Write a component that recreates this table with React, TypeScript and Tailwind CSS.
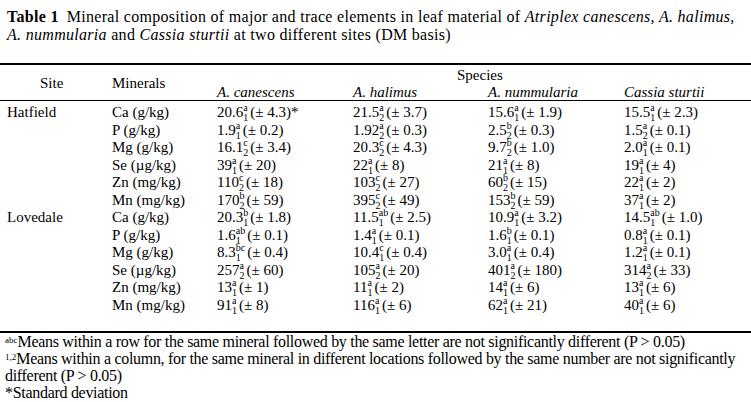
const species = ['A. canescens', 'A. halimus', 'A. nummularia', 'Cassia sturtii'];

type Cell = [string, string, string, string];

const sites: { name: string; rows: { mineral: string; cells: Cell[] }[] }[] = [
  {
    name: 'Hatfield',
    rows: [
      { mineral: 'Ca (g/kg)', cells: [['20.6', '1', 'a', '± 4.3)*'], ['21.5', '2', 'a', '± 3.7)'], ['15.6', '1', 'a', '± 1.9)'], ['15.5', '1', 'a', '± 2.3)']] },
      { mineral: 'P (g/kg)', cells: [['1.9', '1', 'a', '± 0.2)'], ['1.92', '2', 'a', '± 0.3)'], ['2.5', '2', 'b', '± 0.3)'], ['1.5', '2', 'a', '± 0.1)']] },
      { mineral: 'Mg (g/kg)', cells: [['16.1', '2', 'c', '± 3.4)'], ['20.3', '2', 'c', '± 4.3)'], ['9.7', '2', 'b', '± 1.0)'], ['2.0', '1', 'a', '± 0.1)']] },
      { mineral: 'Se (µg/kg)', cells: [['39', '1', 'a', '± 20)'], ['22', '1', 'a', '± 8)'], ['21', '1', 'a', '± 8)'], ['19', '1', 'a', '± 4)']] },
      { mineral: 'Zn (mg/kg)', cells: [['110', '2', 'c', '± 18)'], ['103', '2', 'c', '± 27)'], ['60', '2', 'b', '± 15)'], ['22', '1', 'a', '± 2)']] },
      { mineral: 'Mn (mg/kg)', cells: [['170', '2', 'b', '± 59)'], ['395', '2', 'c', '± 49)'], ['153', '2', 'b', '± 59)'], ['37', '1', 'a', '± 2)']] },
    ],
  },
  {
    name: 'Lovedale',
    rows: [
      { mineral: 'Ca (g/kg)', cells: [['20.3', '1', 'b', '± 1.8)'], ['11.5', '1', 'ab', '± 2.5)'], ['10.9', '1', 'a', '± 3.2)'], ['14.5', '1', 'ab', '± 1.0)']] },
      { mineral: 'P (g/kg)', cells: [['1.6', '1', 'ab', '± 0.1)'], ['1.4', '1', 'a', '± 0.1)'], ['1.6', '1', 'b', '± 0.1)'], ['0.8', '1', 'a', '± 0.1)']] },
      { mineral: 'Mg (g/kg)', cells: [['8.3', '1', 'bc', '± 0.4)'], ['10.4', '1', 'c', '± 0.4)'], ['3.0', '1', 'a', '± 0.4)'], ['1.2', '1', 'a', '± 0.1)']] },
      { mineral: 'Se (µg/kg)', cells: [['257', '2', 'a', '± 60)'], ['105', '2', 'a', '± 20)'], ['401', '2', 'a', '± 180)'], ['314', '2', 'a', '± 33)']] },
      { mineral: 'Zn (mg/kg)', cells: [['13', '1', 'a', '± 1)'], ['11', '1', 'a', '± 2)'], ['14', '1', 'a', '± 6)'], ['13', '1', 'a', '± 6)']] },
      { mineral: 'Mn (mg/kg)', cells: [['91', '1', 'a', '± 8)'], ['116', '1', 'a', '± 6)'], ['62', '1', 'a', '± 21)'], ['40', '1', 'a', '± 6)']] },
    ],
  },
];

const grid = 'grid grid-cols-[112px_105px_136px_135px_136px_1fr]';

function Value({ cell }: { cell: Cell }) {
  const [mean, sub, sup, sd] = cell;
  return (
    <span>
      {mean}
      <span className="mr-[2px] inline-grid text-[10px] leading-[10px]">
        <span className="relative top-[-6px] col-start-1 row-start-1">{sup}</span>
        <span className="relative top-[4px] col-start-1 row-start-1">{sub}</span>
      </span>
      ({sd}
    </span>
  );
}

export default function App() {
  return (
    <main className="h-[402px] w-[751px] overflow-hidden bg-white font-['Liberation_Serif',serif] text-[15px] text-black">
      <div className="pl-[7px] pt-[8px] text-[16px] leading-[18px] tracking-[0.3px]">
        <b>Table 1</b>
        <span className="ml-[8px]">Mineral composition of major and trace elements in leaf material of </span>
        <i>Atriplex canescens, A. halimus,</i>
        <br />
        <i>A. nummularia</i> and <i>Cassia sturtii</i> at two different sites (DM basis)
      </div>

      <div className="mt-[19px] border-t-2 border-black" />
      <div className={`${grid} h-[35px]`}>
        <div className="row-span-2 flex items-center pl-[40px] pt-[1px]">Site</div>
        <div className="row-span-2 flex items-center pt-[1px]">Minerals</div>
        <div className="col-span-4 h-[18px] pl-[240px] pt-[1px] leading-[18px]">Species</div>
        {species.map((s) => (
          <div key={s} className="h-[17px] pt-[1px] leading-[17px] italic">
            {s}
          </div>
        ))}
      </div>
      <div className="border-t border-black" />

      <div className="pt-[3px]">
        {sites.map((site) =>
          site.rows.map((row, i) => (
            <div key={site.name + row.mineral} className={`${grid} h-[17.5px] whitespace-nowrap leading-[17.5px]`}>
              <div className="pl-[7px]">{i === 0 ? site.name : ''}</div>
              <div>{row.mineral}</div>
              {row.cells.map((c, j) => (
                <div key={j}>
                  <Value cell={c} />
                </div>
              ))}
            </div>
          )),
        )}
      </div>

      <div className="mt-[17px] border-t-2 border-black" />
      <div className="whitespace-nowrap pl-[5px] text-[16px] leading-[17px] tracking-[-0.3px]">
        <div>
          <sup className="text-[9px] tracking-normal">abc</sup>Means within a row for the same mineral followed by the same letter are not significantly different (P &gt; 0.05)
        </div>
        <div>
          <sup className="text-[9px] tracking-normal">1,2</sup>Means within a column, for the same mineral in different locations followed by the same number are not significantly
          <br />
          different (P &gt; 0.05)
        </div>
        <div>*Standard deviation</div>
      </div>
    </main>
  );
}
